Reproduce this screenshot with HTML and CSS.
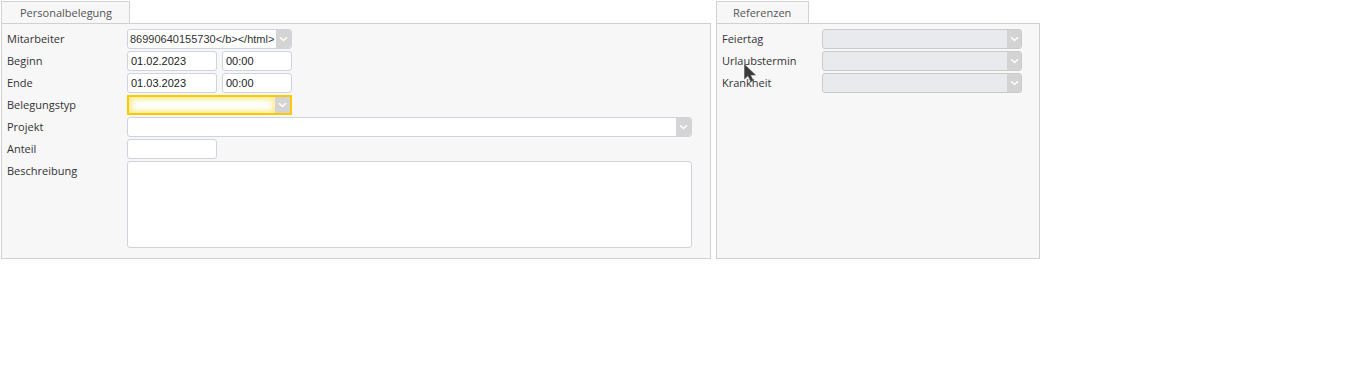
FILE: index.html
```html
<!DOCTYPE html>
<html lang="de">
<head>
<meta charset="utf-8">
<title>Personalbelegung</title>
<link rel="stylesheet" href="styles.css">
</head>
<body>
<div class="page">
  <section class="panel panel-main">
    <div class="tabs"><div class="tab">Personalbelegung</div></div>
    <div class="box">
      <div class="form">
        <label class="lbl">Mitarbeiter</label>
        <div class="ctl"><div class="select w165"><span class="val sans">86990640155730&lt;/b&gt;&lt;/html&gt;</span><span class="arrow"><svg width="9" height="6" viewBox="0 0 9 6"><path d="M1 1.2 L4.5 4.6 L8 1.2" fill="none" stroke="#fff" stroke-width="1.4"/></svg></span></div></div>

        <label class="lbl">Beginn</label>
        <div class="ctl"><input class="inp w90" value="01.02.2023"><input class="inp w70" value="00:00"></div>

        <label class="lbl">Ende</label>
        <div class="ctl"><input class="inp w90" value="01.03.2023"><input class="inp w70" value="00:00"></div>

        <label class="lbl">Belegungstyp</label>
        <div class="ctl"><div class="select w165 focus"><span class="val"></span><span class="arrow"><svg width="9" height="6" viewBox="0 0 9 6"><path d="M1 1.2 L4.5 4.6 L8 1.2" fill="none" stroke="#fff" stroke-width="1.4"/></svg></span></div></div>

        <label class="lbl">Projekt</label>
        <div class="ctl"><div class="select w565"><span class="val"></span><span class="arrow"><svg width="9" height="6" viewBox="0 0 9 6"><path d="M1 1.2 L4.5 4.6 L8 1.2" fill="none" stroke="#fff" stroke-width="1.4"/></svg></span></div></div>

        <label class="lbl">Anteil</label>
        <div class="ctl"><input class="inp w90" value=""></div>

        <label class="lbl">Beschreibung</label>
        <div class="ctl"><textarea class="area w565"></textarea></div>
      </div>
    </div>
  </section>

  <section class="panel panel-ref">
    <div class="tabs"><div class="tab">Referenzen</div></div>
    <div class="box">
      <div class="form form-ref">
        <label class="lbl">Feiertag</label>
        <div class="ctl"><div class="select w200 disabled"><span class="val"></span><span class="arrow"><svg width="9" height="6" viewBox="0 0 9 6"><path d="M1 1.2 L4.5 4.6 L8 1.2" fill="none" stroke="#fff" stroke-width="1.4"/></svg></span></div></div>
        <label class="lbl">Urlaubstermin</label>
        <div class="ctl"><div class="select w200 disabled"><span class="val"></span><span class="arrow"><svg width="9" height="6" viewBox="0 0 9 6"><path d="M1 1.2 L4.5 4.6 L8 1.2" fill="none" stroke="#fff" stroke-width="1.4"/></svg></span></div></div>
        <label class="lbl">Krankheit</label>
        <div class="ctl"><div class="select w200 disabled"><span class="val"></span><span class="arrow"><svg width="9" height="6" viewBox="0 0 9 6"><path d="M1 1.2 L4.5 4.6 L8 1.2" fill="none" stroke="#fff" stroke-width="1.4"/></svg></span></div></div>
      </div>
    </div>
  </section>
</div>
<svg class="cursor" width="14" height="20" viewBox="0 0 14 20"><path d="M0.5 0.5 L0.5 15 L4 11.8 L6.8 17.5 L9.2 16.4 L6.5 11 L11.5 11 Z" fill="#3a3a3a" stroke="#555" stroke-width="0.6"/></svg>
</body>
</html>
```
FILE: styles.css
```css
html, body {
  margin: 0;
  padding: 0;
  background: #fff;
}
body {
  font-family: "Open Sans", "Noto Sans", sans-serif;
  font-size: 11px;
  color: #333;
}
.page {
  display: flex;
  gap: 5px;
  padding: 1px 0 0 1px;
  align-items: flex-start;
}
.panel {
  display: flex;
  flex-direction: column;
}
.panel-main { width: 710px; }
.panel-ref { width: 324px; }
.tabs {
  display: flex;
  height: 22px;
}
.tab {
  box-sizing: border-box;
  height: 22px;
  border: 1px solid #d2d2d2;
  border-bottom: none;
  background: #f7f7f7;
  color: #555;
  line-height: 21px;
  padding: 0 17px 0 18px;
}
.panel-ref .tab { padding: 0 17px 0 16px; }
.box {
  box-sizing: border-box;
  height: 236px;
  border: 1px solid #d0d0d0;
  background: #f7f7f7;
  padding: 5px 5px 0 5px;
}
.form {
  display: grid;
  grid-template-columns: 120px 1fr;
  row-gap: 2px;
}
.form-ref {
  grid-template-columns: 100px 1fr;
}
.lbl {
  line-height: 20px;
  height: 20px;
  color: #333;
}
.ctl {
  display: flex;
  gap: 5px;
  align-items: flex-start;
}
.inp, .select, .area {
  box-sizing: border-box;
  border: 1px solid #cfd3de;
  border-radius: 3px;
  background: #fff;
  height: 20px;
  font-family: "Liberation Sans", Arial, sans-serif;
  font-size: 11px;
  color: #222;
  margin: 0;
  padding: 0 3px;
  outline: none;
}
.area {
  height: 87px;
  resize: none;
  padding: 2px 3px;
}
.w90 { width: 90px; }
.w70 { width: 70px; }
.w165 { width: 165px; }
.w200 { width: 200px; }
.w565 { width: 565px; }
.select {
  display: flex;
  padding: 0;
  overflow: hidden;
}
.select .val {
  flex: 1;
  line-height: 18px;
  padding-left: 2px;
  white-space: nowrap;
  overflow: hidden;
  font-size: 11px;
  color: #333;
}
.select .arrow {
  width: 15px;
  flex: none;
  background: #d4d4d4;
  display: flex;
  align-items: center;
  justify-content: center;
}
.select.focus {
  border: 2px solid #fcc800;
  border-radius: 0;
}
.select.focus .val {
  box-shadow: inset 0 0 5px 3px #ffee99;
}
.select.disabled {
  background: #e8eaed;
  border-color: #cacaca;
}
.select.disabled .arrow { width: 14px; background: #d3d3d3; }
.cursor {
  position: absolute;
  left: 744px;
  top: 64px;
}
```
